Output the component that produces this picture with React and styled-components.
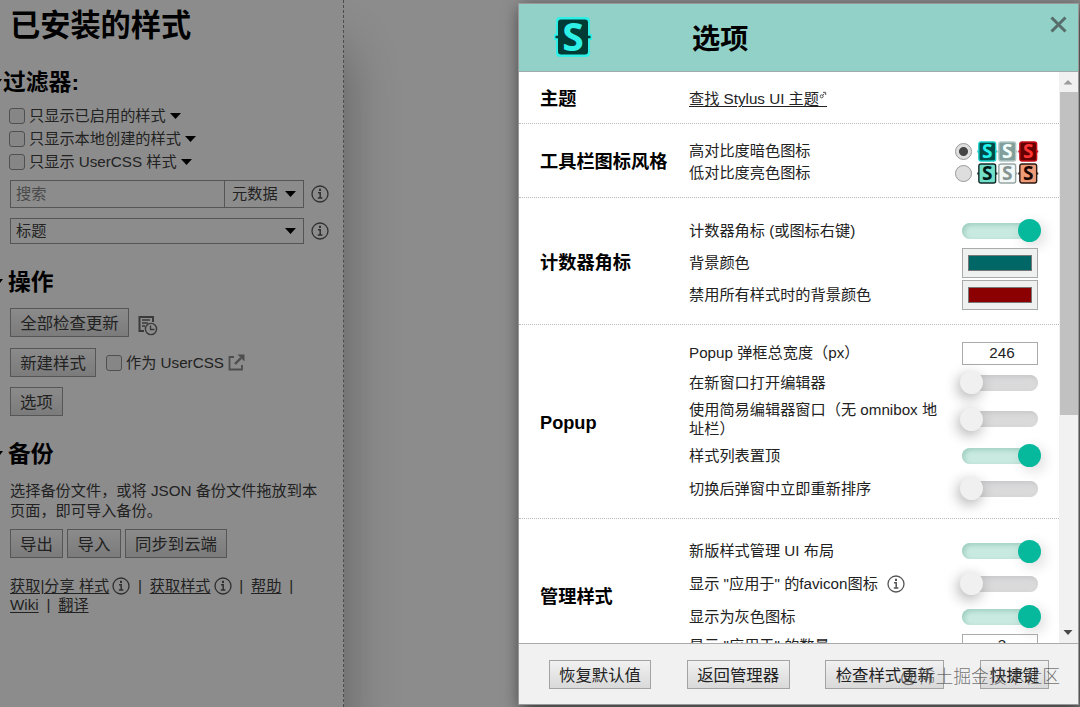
import React from 'react'
import styled, { createGlobalStyle } from 'styled-components'

const filters = ['只显示已启用的样式', '只显示本地创建的样式', '只显示 UserCSS 样式']

const sections = [
  { title: '主题', height: 52, top: 11, rows: [{ label: '查找 Stylus UI 主题', height: 32, type: 'link' }] },
  {
    title: '工具栏图标风格',
    height: 74,
    top: 16,
    rows: [
      { label: '高对比度暗色图标', height: 22, type: 'icons', dark: true, checked: true },
      { label: '低对比度亮色图标', height: 22, type: 'icons' }
    ]
  },
  {
    title: '计数器角标',
    height: 127,
    top: 16,
    rows: [
      { label: '计数器角标 (或图标右键)', height: 33, type: 'toggle', checked: true },
      { label: '背景颜色', height: 32, type: 'color', value: '#006666' },
      { label: '禁用所有样式时的背景颜色', height: 32, type: 'color', value: '#8b0000' }
    ]
  },
  {
    title: 'Popup',
    height: 194,
    top: 14,
    rows: [
      { label: 'Popup 弹框总宽度（px）', height: 28, type: 'number', value: '246' },
      { label: '在新窗口打开编辑器', height: 31, type: 'toggle' },
      { label: '使用简易编辑器窗口（无 omnibox 地址栏）', height: 42, type: 'toggle' },
      { label: '样式列表置顶', height: 31, type: 'toggle', checked: true },
      { label: '切换后弹窗中立即重新排序', height: 35, type: 'toggle' }
    ]
  },
  {
    title: '管理样式',
    height: 153,
    top: 16,
    rows: [
      { label: '新版样式管理 UI 布局', height: 32, type: 'toggle', checked: true },
      { label: '显示 "应用于" 的favicon图标', height: 33, type: 'toggle', info: true },
      { label: '显示为灰色图标', height: 33, type: 'toggle', checked: true },
      { label: '显示 "应用于" 的数量', height: 25, type: 'number', value: '3' }
    ]
  }
]

const InfoIcon = ({ color = '#303030' }) => (
  <Svg width="18" height="18" viewBox="0 0 18 18" fill="none" stroke={color}>
    <circle cx="9" cy="9" r="8" strokeWidth="1.3" />
    <path d="M9 3.8v2.2" strokeWidth="2" />
    <path d="M7 7.8h2.2v5M6.8 13h4.6" strokeWidth="1.5" />
  </Svg>
)

const Caret = () => (
  <Svg width="11" height="6" viewBox="0 0 11 6">
    <path d="M0 0h11L5.5 6z" fill="#000" />
  </Svg>
)

const StyleIcon = ({ bg, fg, edge }) => (
  <Svg width="20.5" height="21" viewBox="0 0 20 21">
    <path d="M0 10.5h20" stroke={edge} strokeWidth="2" />
    <rect x="1.6" y="1" width="16.8" height="19" rx="2" fill={bg} stroke={edge} strokeWidth="1.4" />
    <text x="10" y="17.2" fill={fg} textAnchor="middle" fontFamily="Open Sans, sans-serif" fontSize="19" fontWeight="700">S</text>
  </Svg>
)

const Logo = () => (
  <Svg width="42" height="46" viewBox="0 0 42 46">
    <rect x="4" y="2" width="34" height="40" rx="4" fill="#2ff0e6" />
    <path d="M2 22h38" stroke="#2ff0e6" strokeWidth="6" />
    <rect x="6" y="4.5" width="30" height="35" rx="3" fill="#003b36" />
    <path d="M3.5 22h35" stroke="#003b36" strokeWidth="2.4" />
    <text x="21" y="36" fill="#2ff0e6" textAnchor="middle" fontFamily="Open Sans, sans-serif" fontSize="39" fontWeight="700">S</text>
  </Svg>
)

const HistoryIcon = () => (
  <Svg width="20" height="21" viewBox="0 0 20 21" fill="none" stroke="#3a3a3a">
    <path d="M15 7V2H1.5v14H6" strokeWidth="2" />
    <path d="M4 5h8M4 8h6M4 11h3" strokeWidth="1.5" />
    <circle cx="13" cy="14" r="5.6" strokeWidth="1.4" />
    <path d="M12.5 10.5v4h4" strokeWidth="1.4" />
  </Svg>
)

const ExternalIcon = () => (
  <Svg width="17" height="17" viewBox="0 0 17 17" fill="none" stroke="#4d4d4d" strokeWidth="1.8">
    <path d="M6 3H1.5v12.500h12.500V11" />
    <path d="M7 10l6-6" strokeWidth="2.4" />
    <path d="M9.5 .5h7v7z" fill="#4d4d4d" stroke="none" />
  </Svg>
)

const Control = ({ row }) => {
  if (row.type === 'toggle') return <Toggle $on={row.checked}><Knob $on={row.checked} /></Toggle>
  if (row.type === 'color') return <ColorInput><Swatch $color={row.value} /></ColorInput>
  if (row.type === 'number') return <NumberInput>{row.value}</NumberInput>
  if (row.type === 'icons') {
    return (
      <IconSet>
        <Radio $checked={row.checked} />
        <StyleIcon bg={row.dark ? '#004b48' : '#72dfc9'} fg={row.dark ? '#24f2ec' : '#001c1a'} edge={row.dark ? '#18cfcb' : '#102a28'} />
        <StyleIcon bg={row.dark ? '#839f9b' : '#f1f8f7'} fg={row.dark ? '#f4ffff' : '#879592'} edge={row.dark ? '#b3c9c6' : '#98a5a3'} />
        <StyleIcon bg={row.dark ? '#650000' : '#ef9b78'} fg={row.dark ? '#ff3434' : '#1d0500'} edge={row.dark ? '#c90f18' : '#2c1712'} />
      </IconSet>
    )
  }
  return null
}

const Sidebar = () => (
  <Side>
    <Title>已安装的样式</Title>
    <Heading $top={19} $indent={3}>过滤器:</Heading>
    <Filters>
      {filters.map((filter) => (
        <Filter key={filter}><Checkbox />{filter}<Caret /></Filter>
      ))}
    </Filters>
    <FieldRow>
      <SearchGroup>
        <Search placeholder="搜索" />
        <Scope>元数据<Caret /></Scope>
      </SearchGroup>
      <InfoIcon />
    </FieldRow>
    <FieldRow $top={10}>
      <Sort>标题<Caret /></Sort>
      <InfoIcon />
    </FieldRow>

    <Heading $top={21} $indent={8} $marker>操作</Heading>
    <ButtonRow $top={9} $gap={9}>
      <SideButton $width={119}>全部检查更新</SideButton>
      <HistoryIcon />
    </ButtonRow>
    <ButtonRow $top={11} $gap={11}>
      <SideButton $width={86}>新建样式</SideButton>
      <Filter><Checkbox />作为 UserCSS<ExternalIcon /></Filter>
    </ButtonRow>
    <ButtonRow $top={10}>
      <SideButton $width={53}>选项</SideButton>
    </ButtonRow>

    <Heading $top={21} $indent={8} $marker>备份</Heading>
    <Note>选择备份文件，或将 JSON 备份文件拖放到本页面，即可导入备份。</Note>
    <ButtonRow $top={9} $gap={4}>
      <SideButton $width={53}>导出</SideButton>
      <SideButton $width={54}>导入</SideButton>
      <SideButton $width={102}>同步到云端</SideButton>
    </ButtonRow>
    <Links>
      <LinkLine>
        <a>获取|分享 样式</a><InfoIcon /><Pipe>|</Pipe>
        <a>获取样式</a><InfoIcon /><Pipe>|</Pipe>
        <a>帮助</a><Pipe>|</Pipe>
      </LinkLine>
      <LinkLine><a>Wiki</a><Pipe>|</Pipe><a>翻译</a></LinkLine>
    </Links>
  </Side>
)

const Options = () => (
  <Dialog>
    <Header>
      <Logo />
      <HeaderTitle>选项</HeaderTitle>
      <Close width="17" height="17" viewBox="0 0 17 17">
        <path d="M1.5 1.500l14 14M15.500 1.500l-14 14" stroke="#566d6b" strokeWidth="3" />
      </Close>
    </Header>
    <Body>
      <Content>
        {sections.map((section) => (
          <Section key={section.title} $height={section.height}>
            <SectionTitle>{section.title}</SectionTitle>
            <Rows $top={section.top}>
              {section.rows.map((row) => (
                <Row key={row.label} $height={row.height}>
                  <Label $link={row.type === 'link'}>
                    {row.label}
                    {row.type === 'link' && (
                      <LinkMark width="8" height="9" viewBox="0 0 8 9" fill="none" stroke="#444">
                        <circle cx="2.5" cy="6" r="1.7" />
                        <path d="M3.5 5l2-2M4 1.500h3v3" />
                      </LinkMark>
                    )}
                  </Label>
                  {row.info && <InfoSlot><InfoIcon color="#555" /></InfoSlot>}
                  <Spacer />
                  <Control row={row} />
                </Row>
              ))}
            </Rows>
          </Section>
        ))}
      </Content>
      <Scrollbar>
        <Arrow viewBox="0 0 18 20"><path d="M4.5 12.500h9L9 8z" fill="#9c9c9c" /></Arrow>
        <Thumb />
        <Arrow viewBox="0 0 18 20"><path d="M4.5 7h9L9 12z" fill="#4a4a4a" /></Arrow>
      </Scrollbar>
    </Body>
    <Footer>
      <Button $width={102}>恢复默认值</Button>
      <Button $width={103}>返回管理器</Button>
      <Button $width={119}>检查样式更新</Button>
      <Button $width={69}>快捷键</Button>
    </Footer>
  </Dialog>
)

const App = () => (
  <Page lang="zh-CN">
    <Global />
    <Sidebar />
    <Options />
    <Watermark>@稀土掘金技术社区</Watermark>
  </Page>
)

const Global = createGlobalStyle`
  * {
    box-sizing: border-box;
  }
  body {
    margin: 0;
    overflow: hidden;
    font-family: "Liberation Sans", "Noto Sans CJK SC", sans-serif;
    font-size: 15.2px;
    line-height: 20px;
    color: #222;
  }
`

const Page = styled.div`
  position: relative;
  display: flex;
  justify-content: space-between;
  width: 1080px;
  height: 707px;
  overflow: hidden;
  background: #8c8c8c;
`

const Svg = styled.svg`
  display: block;
  flex-shrink: 0;
  overflow: visible;
`

const Side = styled.aside`
  width: 344px;
  height: 707px;
  padding: 6px 0 0 10px;
  border-right: 1px dashed #4d4d4d;
  box-shadow: 0 50px 50px rgba(0, 0, 0, 0.32);
  background: #8c8c8c;
`

const Title = styled.h1`
  margin: 0;
  font-size: 30.2px;
  line-height: 40px;
  color: #000;
`

const Heading = styled.h2`
  position: relative;
  margin: ${(props) => props.$top}px 0 0 ${(props) => props.$indent - 10}px;
  font-size: 22.8px;
  line-height: 34px;
  color: #000;

  &::before {
    content: '';
    position: absolute;
    left: ${(props) => (props.$marker ? -17 : -13)}px;
    top: 14px;
    border: 6px solid transparent;
    border-top: 8px solid #000;
    border-bottom: 0;
  }
`

const Filters = styled.div`
  margin: 6px 0 7px;
`

const Filter = styled.label`
  display: flex;
  align-items: center;
  height: 22.7px;
  gap: 4px;
`

const Checkbox = styled.span`
  width: 16px;
  height: 16px;
  margin-left: -1px;
  border: 1px solid #505050;
  border-radius: 3px;
  background: #868686;
`

const FieldRow = styled.div`
  display: flex;
  align-items: center;
  gap: 7px;
  margin-top: ${(props) => props.$top || 0}px;
`

const SearchGroup = styled.div`
  display: flex;
  width: 294px;
  height: 28px;
  border: 1px solid #555;
`

const Search = styled.input`
  width: 213px;
  padding: 0 5px;
  border: 0;
  background: transparent;
  font: inherit;

  &::placeholder {
    color: #4a4a4a;
  }
`

const Scope = styled.div`
  display: flex;
  flex: 1;
  align-items: center;
  justify-content: space-between;
  padding: 0 7px;
  border-left: 1px solid #555;
`

const Sort = styled.div`
  display: flex;
  align-items: center;
  justify-content: space-between;
  width: 294px;
  height: 26px;
  padding: 0 7px 0 5px;
  border: 1px solid #555;
`

const ButtonRow = styled.div`
  display: flex;
  align-items: center;
  gap: ${(props) => props.$gap || 0}px;
  margin-top: ${(props) => props.$top}px;

  > svg {
    margin-top: 5px;
  }
`

const Button = styled.button`
  width: ${(props) => props.$width}px;
  height: 29px;
  padding: 0;
  border: 1px solid #a3a3a3;
  background: linear-gradient(#f1f1f1, #d9d9d9);
  font: inherit;
  font-size: 16.4px;
  line-height: 26px;
  white-space: nowrap;
  color: #222;
`

const SideButton = styled(Button)`
  border-color: #565656;
  background: linear-gradient(#8b8b8b, #7b7b7b);
`

const Note = styled.p`
  width: 316px;
  margin: 10px 0 0;
  line-height: 19.5px;
`

const Links = styled.div`
  margin-top: 18px;
`

const LinkLine = styled.div`
  display: flex;
  align-items: center;
  height: 19.5px;

  a {
    text-decoration: underline;
    text-underline-offset: 2px;
  }

  svg {
    margin-left: 3px;
  }
`

const Pipe = styled.span`
  width: 19.5px;
  text-align: center;
`

const Dialog = styled.section`
  display: flex;
  flex-direction: column;
  width: 561px;
  height: 702px;
  margin: 3px 1px 0 0;
  border: 1px solid #999;
  box-shadow: 3px 5px 16px rgba(0, 0, 0, 0.65);
  background: #fff;
`

const Header = styled.header`
  display: flex;
  align-items: center;
  height: 68px;
  padding: 0 11px 0 33px;
  border-bottom: 1px solid #a0aaa8;
  background: #92d1c7;
`

const HeaderTitle = styled.h1`
  flex: 1;
  margin: 3px 0 0 98px;
  font-size: 28.2px;
  line-height: 40px;
  color: #000;
`

const Close = styled(Svg)`
  margin-bottom: 27px;
`

const Body = styled.div`
  display: flex;
  height: 571px;
`

const Content = styled.div`
  flex: 1;
  overflow: hidden;
`

const Section = styled.section`
  display: flex;
  height: ${(props) => props.$height}px;
  border-bottom: 1px dotted #bbb;
`

const SectionTitle = styled.h3`
  align-self: center;
  width: 149px;
  margin: 3px 0 0 21px;
  font-size: 18.2px;
  line-height: 26px;
  color: #000;
`

const Rows = styled.div`
  width: 349px;
  padding-top: ${(props) => props.$top}px;
`

const Row = styled.div`
  display: flex;
  align-items: center;
  height: ${(props) => props.$height}px;
`

const Label = styled.span`
  max-width: 256px;
  line-height: 19.5px;
  text-decoration: ${(props) => (props.$link ? 'underline' : 'none')};
  text-underline-offset: 2px;
`

const Spacer = styled.span`
  flex: 1;
`

const LinkMark = styled.svg`
  border-bottom: 1px solid #222;
  vertical-align: -3px;
  padding-bottom: 7px;
  height: 16px;
`

const InfoSlot = styled.span`
  margin-left: 9px;
`

const Toggle = styled.span`
  display: flex;
  align-items: center;
  justify-content: ${(props) => (props.$on ? 'flex-end' : 'flex-start')};
  width: 76px;
  height: 16px;
  flex-shrink: 0;
  border-radius: 8px;
  background: ${(props) => (props.$on ? '#c9eae1' : '#dadadb')};
  box-shadow: inset 2px 2px 5px ${(props) => (props.$on ? '#9fcdbf' : '#c6c6c8')};
`

const Knob = styled.span`
  width: 23px;
  height: 23px;
  flex-shrink: 0;
  margin: 0 ${(props) => (props.$on ? '-3px' : 0)} 0 ${(props) => (props.$on ? 0 : '-2px')};
  border-radius: 50%;
  background: ${(props) => (props.$on ? '#07b99c' : '#f0f0f0')};
  box-shadow: ${(props) => (props.$on ? '4px 4px 14px rgba(0, 0, 0, 0.14)' : '-2px 4px 14px rgba(0, 0, 0, 0.32)')};
`

const ColorInput = styled.span`
  width: 76px;
  height: 30px;
  flex-shrink: 0;
  padding: 6px 5px;
  border: 1px solid #aaa;
  background: #eff0f0;
`

const Swatch = styled.span`
  display: block;
  width: 64px;
  height: 16px;
  border: 1px solid #777;
  background: ${(props) => props.$color};
`

const NumberInput = styled.span`
  width: 76px;
  height: 23px;
  flex-shrink: 0;
  border: 1px solid #aaa;
  padding-left: 4px;
  text-align: center;
  line-height: 20px;
`

const IconSet = styled.span`
  display: flex;
  align-items: center;
`

const Radio = styled.span`
  width: 17px;
  height: 17px;
  margin-right: 5px;
  border: 1px solid #999;
  border-radius: 50%;
  background: ${(props) => (props.$checked ? 'radial-gradient(circle, #444 4px, #dedede 5px)' : '#dedede')};
`

const Scrollbar = styled.div`
  display: flex;
  flex-direction: column;
  width: 19px;
  background: #f1f1f1;
`

const Arrow = styled.svg`
  width: 18px;
  height: 20px;

  &:last-child {
    margin-top: auto;
  }
`

const Thumb = styled.div`
  width: 18px;
  height: 323px;
  margin-left: 1px;
  background: #c1c1c1;
`

const Footer = styled.footer`
  display: flex;
  flex: 1;
  align-items: center;
  justify-content: space-between;
  padding: 1px 29px 0 30px;
  border-top: 1px solid #aaa;
  background: #f1f1f1;
`

const Watermark = styled.div`
  position: absolute;
  right: 20px;
  bottom: 18px;
  font-size: 17.8px;
  font-weight: 300;
  line-height: 24px;
  color: rgba(70, 70, 70, 0.75);
`

export default App
